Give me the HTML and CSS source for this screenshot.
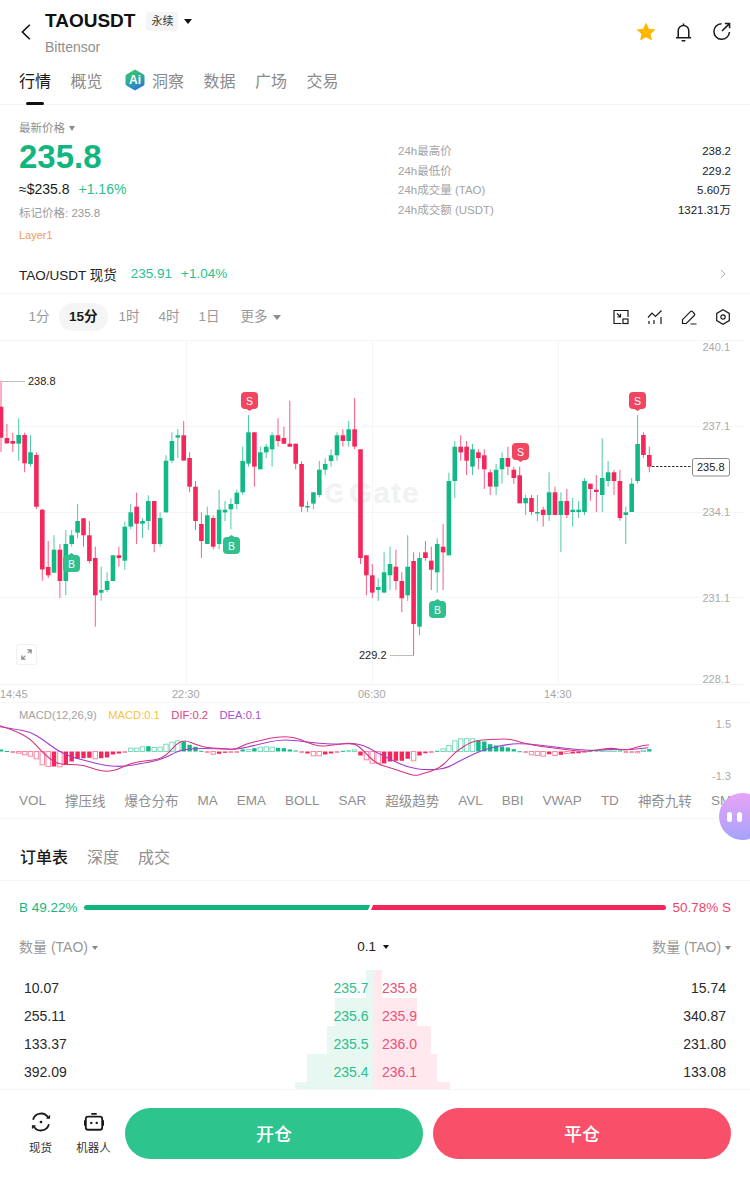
FILE: index.html
```html
<!DOCTYPE html>
<html lang="zh-CN">
<head>
    <meta charset="UTF-8">
    <meta name="viewport" content="width=device-width, initial-scale=1.0">
    <title>TAOUSDT</title>
    <link rel="stylesheet" href="styles.css">
</head>
<body>

<div class="page">

<header class="topbar">
    <svg class="back" viewBox="0 0 10 16"><path d="M8.800 .8 1.400 8l7.400 7.200"/></svg>
    <div class="symbol">
        <div class="symbol-line">
            <span class="symbol-name">TAOUSDT</span>
            <span class="perp">永续</span>
            <span class="caret caret-dark"></span>
        </div>
        <div class="symbol-sub">Bittensor</div>
    </div>
    <div class="top-icons">
        <svg class="star" viewBox="0 0 20 20"><path d="M10 .6l2.900 6.100 6.600.8-4.900 4.500 1.300 6.600L10 15.300l-5.900 3.300 1.300-6.600L.5 7.500l6.600-.8z"/></svg>
        <svg class="icon-line bell" viewBox="0 0 18 20"><path d="M3.400 16V8.600a5.600 5.600 0 0 1 11.200 0V16M1 16h16M7 19.200h4M9 1v2"/></svg>
        <svg class="icon-line share" viewBox="0 0 20 20"><path d="M18.400 10.500a8.200 8.200 0 1 1-8.400-8.700M10.500 9.500 18.400 1.700M13.500 1.500h5v5"/></svg>
    </div>
</header>

<nav class="tabs">
    <span class="tab active">行情</span>
    <span class="tab">概览</span>
    <span class="tab tab-ai">
        <svg class="ai-icon" viewBox="0 0 20 22">
            <defs>
                <linearGradient id="aiGrad" x1=".3" y1="0" x2=".7" y2="1">
                    <stop offset="0" stop-color="#3ac665"/>
                    <stop offset=".55" stop-color="#2aa6a8"/>
                    <stop offset="1" stop-color="#2a6fe0"/>
                </linearGradient>
            </defs>
            <path fill="url(#aiGrad)" d="M10 .5l8.300 4.800q1.200.7 1.200 2v7.400q0 1.300-1.200 2L10 21.500l-8.300-4.800Q.5 16 .5 14.700V7.300q0-1.300 1.200-2z"/>
            <text class="ai-text" x="10" y="15">Ai</text>
        </svg>
        洞察
    </span>
    <span class="tab">数据</span>
    <span class="tab">广场</span>
    <span class="tab">交易</span>
</nav>

<section class="summary">
    <div class="price-col">
        <div class="price-label">最新价格 <span class="caret caret-gray"></span></div>
        <div class="price">235.8</div>
        <div class="price-sub"><span>≈$235.8</span><span class="up">+1.16%</span></div>
        <div class="mark">标记价格: 235.8</div>
        <div class="sector">Layer1</div>
    </div>
    <div class="stats">
        <div class="stat"><span>24h最高价</span><b>238.2</b></div>
        <div class="stat"><span>24h最低价</span><b>229.2</b></div>
        <div class="stat"><span>24h成交量 (TAO)</span><b>5.60万</b></div>
        <div class="stat"><span>24h成交额 (USDT)</span><b>1321.31万</b></div>
    </div>
</section>

<div class="spot">
    <span class="spot-name">TAO/USDT 现货</span>
    <span class="spot-price">235.91</span>
    <span class="spot-price">+1.04%</span>
    <svg class="spot-arrow" viewBox="0 0 6 10"><path d="M1 1l4 4-4 4"/></svg>
</div>

<div class="periods">
    <span class="period">1分</span>
    <span class="period current">15分</span>
    <span class="period">1时</span>
    <span class="period">4时</span>
    <span class="period">1日</span>
    <span class="period more">更多 <span class="caret caret-more"></span></span>
    <div class="tools">
        <svg class="icon-line tool" viewBox="0 0 16 16"><path d="M8.500 14.500H1v-13h14v6.500M4 4.500 7.500 8M7.500 4.800V8H4.300"/><rect x="10" y="10" width="5" height="4.500"/></svg>
        <svg class="icon-line tool" viewBox="0 0 16 16"><path d="M1 8.500 5 4l3.500 3.500L14.500 1.500M2 12v3M7 11v4M14 8v7"/></svg>
        <svg class="icon-line tool" viewBox="0 0 16 16"><path d="M1.500 14.500v-3.800l8-8q1-1 2 0l1.800 1.800q1 1 0 2l-8 8zM9.500 15H15.500"/></svg>
        <svg class="icon-line tool" viewBox="0 0 16 16"><path d="M8 .8l6.300 3.600v7.200L8 15.200l-6.300-3.600V4.400z"/><circle cx="8" cy="8" r="2.200"/></svg>
    </div>
</div>

<div class="chart">
    <svg id="candles" class="chart-svg" width="750" height="363" viewBox="0 0 750 363">
        <g class="grid">
            <path d="M0 .5H745M0 86.500H745M0 172.500H745M0 257.500H745M0 344.500H745M186.500 0V344M372.500 0V344M558.500 0V344"/>
        </g>
        <g class="watermark">
            <path d="M341 147.500A8 8 0 1 0 342 157.500M335 153h7"/>
            <text x="349" y="163">Gate</text>
        </g>
        <g class="y-axis">
            <text x="730" y="11">240.1</text>
            <text x="730" y="90">237.1</text>
            <text x="730" y="176">234.1</text>
            <text x="730" y="262">231.1</text>
            <text x="730" y="343">228.1</text>
        </g>
        <g class="x-axis">
            <text x="0" y="358">14:45</text>
            <text x="172" y="358">22:30</text>
            <text x="358" y="358">06:30</text>
            <text x="544" y="358">14:30</text>
        </g>
        <path class="leader" d="M2 41.500H25M390 315.500H414"/>
        <text class="extreme" x="28" y="45">238.8</text>
        <text class="extreme" x="359" y="319">229.2</text>
        <path class="last-line" d="M652 126.500H692"/>
        <rect class="last-box" x="692.500" y="118.500" width="37" height="17.500" rx="2"/>
        <text class="extreme" x="697" y="131">235.8</text>
    </svg>
    <div class="expand">
        <svg class="expand-icon" viewBox="0 0 12 12"><path d="M7 1h4v4M11 1 7.500 4.500M5 11H1V7M1 11l3.500-3.500"/></svg>
    </div>
</div>

<div class="macd">
    <div class="macd-legend">
        <span>MACD(12,26,9)</span>
        <span class="c-macd">MACD:0.1</span>
        <span class="c-dif">DIF:0.2</span>
        <span class="c-dea">DEA:0.1</span>
    </div>
    <svg id="macd" width="750" height="82" viewBox="0 0 750 82">
        <text class="macd-axis" x="731" y="25">1.5</text>
        <text class="macd-axis" x="731" y="77">-1.3</text>
    </svg>
</div>

<div class="indicators">
    <span>VOL</span><span>撑压线</span><span>爆仓分布</span><span>MA</span><span>EMA</span><span>BOLL</span><span>SAR</span><span>超级趋势</span><span>AVL</span><span>BBI</span><span>VWAP</span><span>TD</span><span>神奇九转</span><span>SMC</span>
</div>

<div class="float-bot"><i></i><i></i></div>

<div class="book-tabs">
    <span class="book-tab active">订单表</span>
    <span class="book-tab">深度</span>
    <span class="book-tab">成交</span>
</div>

<div class="ratio">
    <span class="up">B 49.22%</span>
    <div class="ratio-bar">
        <div class="ratio-buy"></div>
        <div class="ratio-sell"></div>
    </div>
    <span class="down">50.78% S</span>
</div>

<div class="book-head">
    <span class="head-cell">数量 (TAO) <span class="caret caret-small"></span></span>
    <span class="head-mid">0.1 <span class="caret caret-dark caret-small"></span></span>
    <span class="head-cell">数量 (TAO) <span class="caret caret-small"></span></span>
</div>

<div class="book">
    <div class="row">
        <div class="side bid"><i class="bar" style="width:7px"></i><span class="qty">10.07</span><span class="px">235.7</span></div>
        <div class="side ask"><i class="bar" style="width:9px"></i><span class="px">235.8</span><span class="qty">15.74</span></div>
    </div>
    <div class="row">
        <div class="side bid"><i class="bar" style="width:38px"></i><span class="qty">255.11</span><span class="px">235.6</span></div>
        <div class="side ask"><i class="bar" style="width:44px"></i><span class="px">235.9</span><span class="qty">340.87</span></div>
    </div>
    <div class="row">
        <div class="side bid"><i class="bar" style="width:46px"></i><span class="qty">133.37</span><span class="px">235.5</span></div>
        <div class="side ask"><i class="bar" style="width:58px"></i><span class="px">236.0</span><span class="qty">231.80</span></div>
    </div>
    <div class="row">
        <div class="side bid"><i class="bar" style="width:66px"></i><span class="qty">392.09</span><span class="px">235.4</span></div>
        <div class="side ask"><i class="bar" style="width:64px"></i><span class="px">236.1</span><span class="qty">133.08</span></div>
    </div>
    <div class="row">
        <div class="side bid"><i class="bar" style="width:78px"></i></div>
        <div class="side ask"><i class="bar" style="width:77px"></i></div>
    </div>
</div>

<footer class="bottom">
    <div class="shortcut">
        <svg class="icon-line short-icon" viewBox="0 0 22 22">
            <path d="M2.300 8.500A9 9 0 0 1 19 6.500M19.700 13.500A9 9 0 0 1 3 15.500"/>
            <path class="solid" d="M16.500 7.500h4.500V3zM5.500 14.500H1V19z"/>
            <circle class="solid" cx="11" cy="11" r="1.500"/>
        </svg>
        <span>现货</span>
    </div>
    <div class="shortcut">
        <svg class="icon-line short-icon" viewBox="0 0 22 22">
            <rect x="2" y="5" width="18" height="14.500" rx="2.500"/>
            <path d="M8 2h6M.8 9v6M21.200 9v6"/>
            <circle class="solid" cx="8" cy="12" r="1.300"/>
            <circle class="solid" cx="14" cy="12" r="1.300"/>
        </svg>
        <span>机器人</span>
    </div>
    <button class="trade open">开仓</button>
    <button class="trade close">平仓</button>
</footer>

</div>

<script src="chart.js"></script>
</body>
</html>
```
FILE: styles.css
```css
* {
    box-sizing: border-box;
}
html, body {
    margin: 0;
    padding: 0;
    background: #fff;
}
body {
    font-family: "Liberation Sans", "Noto Sans CJK SC", sans-serif;
    color: #1a1a1a;
}
.page {
    position: relative;
    width: 750px;
    height: 1178px;
    overflow: hidden;
}
.up {
    color: #17b582;
}
.down {
    color: #ee4468;
}
.caret {
    display: inline-block;
    width: 0;
    height: 0;
    border-left: 4px solid transparent;
    border-right: 4px solid transparent;
    border-top: 5px solid #888;
    vertical-align: middle;
}
.caret-dark {
    border-top-color: #111;
}
.caret-gray {
    border-left-width: 3.5px;
    border-right-width: 3.5px;
    border-top-color: #8c8c8c;
    margin-left: 1px;
}
.caret-more {
    margin-left: 2px;
    border-top-color: #8c8c8c;
}
.caret-small {
    border-left-width: 3px;
    border-right-width: 3px;
    border-top-width: 4px;
}
.icon-line {
    fill: none;
    stroke: #1a1a1a;
    stroke-width: 1.6;
}
.icon-line .solid {
    fill: #1a1a1a;
    stroke: none;
}

/* top bar */
.topbar {
    display: flex;
    height: 62px;
    padding: 9px 19px 0 21px;
}
.back {
    width: 10px;
    height: 16px;
    margin-top: 15px;
    fill: none;
    stroke: #111;
    stroke-width: 1.6;
}
.symbol {
    margin-left: 14px;
}
.symbol-line {
    display: flex;
    align-items: center;
    height: 24px;
}
.symbol-name {
    font-size: 19px;
    font-weight: 700;
    color: #111;
}
.perp {
    margin: 0 6px 0 11px;
    padding: 0 5px;
    height: 19px;
    line-height: 19px;
    background: #f5f5f5;
    border-radius: 3px;
    font-size: 11px;
    color: #333;
}
.symbol-sub {
    margin-top: 6px;
    font-size: 14px;
    line-height: 16px;
    color: #8f8f8f;
}
.top-icons {
    display: flex;
    align-items: flex-start;
    margin-left: auto;
    padding-top: 13px;
}
.star {
    width: 20px;
    height: 20px;
    fill: #ffb800;
}
.bell {
    width: 17px;
    height: 20px;
    margin-left: 19px;
}
.share {
    width: 19px;
    height: 19px;
    margin-left: 20px;
}

/* tabs */
.tabs {
    position: relative;
    display: flex;
    gap: 19.5px;
    height: 43px;
    padding: 6px 19px 0;
    border-bottom: 1px solid #f3f3f3;
}
.tab {
    position: relative;
    display: flex;
    align-items: center;
    height: 24px;
    font-size: 16px;
    color: #8a8a8a;
}
.tab.active {
    color: #1a1a1a;
}
.tab.active::after {
    content: "";
    position: absolute;
    left: 7px;
    top: 34px;
    width: 18px;
    height: 3px;
    border-radius: 2px;
    background: #111;
}
.tab-ai {
    margin-left: 3px;
}
.ai-icon {
    width: 20px;
    height: 22px;
    margin-right: 7px;
}
.ai-text {
    font-size: 12px;
    font-weight: 700;
    fill: #fff;
    text-anchor: middle;
}

/* price block */
.summary {
    display: flex;
    height: 146px;
    padding: 15px 19px 0;
}
.price-col {
    width: 379px;
}
.price-label {
    font-size: 11.5px;
    line-height: 16px;
    color: #8f8f8f;
}
.price {
    margin-top: 1px;
    font-size: 33px;
    line-height: 40px;
    font-weight: 700;
    color: #11b67f;
}
.price-sub {
    display: flex;
    gap: 9px;
    margin-top: 2px;
    font-size: 14px;
    line-height: 20px;
}
.price-sub .up {
    color: #2abf8e;
}
.mark {
    margin-top: 6px;
    font-size: 11.5px;
    line-height: 16px;
    color: #9a9a9a;
}
.sector {
    margin-top: 6px;
    font-size: 11px;
    line-height: 16px;
    color: #f59a52;
}
.stats {
    flex: 1;
    padding-top: 22px;
}
.stat {
    display: flex;
    justify-content: space-between;
    height: 19.6px;
    font-size: 11.5px;
    line-height: 19.6px;
    color: #a3a3a3;
}
.stat b {
    font-weight: 400;
    color: #1a1a1a;
}

/* spot row */
.spot {
    display: flex;
    align-items: center;
    gap: 14px;
    height: 43px;
    padding: 3px 24px 0 19px;
    border-bottom: 1px solid #f5f5f5;
    font-size: 13.5px;
}
.spot-name {
    color: #222;
}
.spot-price {
    color: #2abf8e;
    margin-right: -5px;
}
.spot-arrow {
    width: 6px;
    height: 10px;
    margin-left: auto;
    fill: none;
    stroke: #aaa;
    stroke-width: 1;
}

/* period row */
.periods {
    display: flex;
    align-items: center;
    height: 46px;
    padding: 0 19px;
}
.period {
    height: 28px;
    padding: 0 9.5px;
    line-height: 28px;
    border-radius: 14px;
    font-size: 13.5px;
    color: #999;
}
.period.current {
    margin: 0 1px 0 -0.5px;
    padding: 0 10.5px;
    background: #f5f5f5;
    color: #1a1a1a;
    font-weight: 700;
}
.more {
    margin-left: 2px;
}
.tools {
    display: flex;
    gap: 18px;
    margin-left: auto;
}
.tool {
    width: 16px;
    height: 16px;
    stroke-width: 1.2;
}

/* kline chart */
.chart {
    position: relative;
    height: 363px;
    border-bottom: 1px solid #f5f5f5;
}
.chart-svg {
    display: block;
}
.grid path {
    fill: none;
    stroke: #f5f5f5;
    stroke-width: 1;
}
.watermark path {
    fill: none;
    stroke: #f0f2f3;
    stroke-width: 4;
}
.watermark text {
    font-size: 30px;
    font-weight: 700;
    letter-spacing: 1px;
    fill: #f0f2f3;
}
.y-axis text {
    font-size: 11px;
    fill: #aaa;
    text-anchor: end;
}
.x-axis text {
    font-size: 11px;
    fill: #a6a6a6;
}
.leader {
    fill: none;
    stroke: #bdbdbd;
    stroke-width: 1;
}
.extreme {
    font-size: 11px;
    fill: #222;
}
.last-line {
    fill: none;
    stroke: #333;
    stroke-width: 1;
    stroke-dasharray: 2.500 1.500;
}
.last-box {
    fill: #fff;
    stroke: #8a8a8a;
    stroke-width: 1;
}
.wick {
    stroke-width: 1;
}
.tag-text {
    font-size: 10.500px;
    fill: #fff;
    text-anchor: middle;
}
.expand {
    position: absolute;
    left: 16px;
    top: 304px;
    display: flex;
    align-items: center;
    justify-content: center;
    width: 21px;
    height: 21px;
    background: #fff;
    border: 1px solid #f0f0f0;
    border-radius: 3px;
}
.expand-icon {
    width: 11px;
    height: 11px;
    fill: none;
    stroke: #8a8a8a;
    stroke-width: 1.4;
}

/* macd */
.macd {
    position: relative;
    height: 81px;
}
.macd svg {
    display: block;
}
.macd-legend {
    position: absolute;
    left: 19px;
    top: 4px;
    display: flex;
    gap: 11.5px;
    font-size: 11.2px;
    line-height: 16px;
    color: #a3a3a3;
}
.c-macd {
    color: #f5c542;
}
.c-dif {
    color: #e0417f;
}
.c-dea {
    color: #a94fd0;
}
.macd-axis {
    font-size: 11px;
    fill: #aaa;
    text-anchor: end;
}

/* indicator strip */
.indicators {
    display: flex;
    align-items: center;
    gap: 19px;
    height: 35px;
    padding: 0 0 2px 19px;
    border-bottom: 1px solid #f5f5f5;
    white-space: nowrap;
    font-size: 13.5px;
    color: #8f8f8f;
}
.float-bot {
    position: absolute;
    left: 719px;
    top: 793px;
    display: flex;
    align-items: center;
    gap: 5px;
    width: 47px;
    height: 47px;
    padding-left: 8px;
    border-radius: 50%;
    background: linear-gradient(180deg, #e8a3f5, #a6a3fb);
}
.float-bot i {
    width: 5px;
    height: 10px;
    border-radius: 3px;
    background: #fff;
}

/* order book */
.book-tabs {
    display: flex;
    align-items: center;
    gap: 19px;
    height: 62px;
    padding: 12px 20px 0;
    border-bottom: 1px solid #f5f5f5;
    font-size: 16px;
    color: #8f8f8f;
}
.book-tab.active {
    color: #1a1a1a;
    font-weight: 500;
}
.ratio {
    display: flex;
    align-items: center;
    justify-content: space-between;
    height: 53px;
    padding: 0 19px;
    font-size: 13.5px;
}
.ratio-bar {
    display: flex;
    gap: 1px;
    width: 582px;
    height: 5px;
}
.ratio-buy {
    flex: 286;
    background: #11b67f;
    border-radius: 3px 0 0 3px;
    clip-path: polygon(0 0, 100% 0, calc(100% - 2px) 100%, 0 100%);
}
.ratio-sell {
    flex: 295;
    background: #f5265b;
    border-radius: 0 3px 3px 0;
    clip-path: polygon(2px 0, 100% 0, 100% 100%, 0 100%);
}
.book-head {
    display: flex;
    align-items: center;
    justify-content: space-between;
    height: 24px;
    padding: 0 19px;
    font-size: 14px;
    color: #999;
}
.head-mid {
    margin-right: 4px;
    font-size: 13.5px;
    color: #222;
}
.head-mid .caret {
    margin-left: 3px;
}
.book {
    height: 119px;
    margin-top: 12px;
    overflow: hidden;
}
.row {
    display: flex;
    height: 28px;
    font-size: 14px;
    line-height: 36px;
}
.side {
    position: relative;
    display: flex;
    justify-content: space-between;
}
.bid {
    width: 372.500px;
    padding: 0 4px 0 24px;
}
.ask {
    width: 377.500px;
    padding: 0 24px 0 9.500px;
}
.bar {
    position: absolute;
    top: 0;
    bottom: 0;
}
.bid .bar {
    right: 0;
    background: #e6f8f1;
}
.ask .bar {
    left: 0;
    background: #ffe9ee;
}
.px, .qty {
    position: relative;
}
.qty {
    color: #2a2a2a;
}
.bid .px {
    color: #2abf8e;
}
.ask .px {
    color: #ee4f76;
}

/* bottom bar */
.bottom {
    display: flex;
    align-items: flex-start;
    height: 89px;
    padding: 18px 19px 0 0;
    border-top: 1px solid #f5f5f5;
}
.shortcut {
    display: flex;
    flex-direction: column;
    align-items: center;
    width: 53px;
    font-size: 11.5px;
    color: #333;
}
.shortcut:first-child {
    margin-left: 14px;
}
.short-icon {
    width: 20px;
    height: 20px;
    margin: 4px 0 7px;
    stroke-width: 2;
}
.trade {
    width: 298px;
    height: 51px;
    padding: 0 0 2px;
    border: none;
    border-radius: 26px;
    color: #fff;
    font-family: inherit;
    font-size: 18px;
    font-weight: 500;
}
.open {
    margin-left: 5px;
    background: #2dc48d;
}
.close {
    margin-left: 10px;
    background: #f9506a;
}
```
FILE: chart.js
```js
// readings are in 3x zoom units, so divide by 3 when drawing
const GREEN = '#12b886';
const RED = '#f5265b';

// color, high, low, body top, body bottom
const candles = [
    'R122,336,200,293','R252,312,294,310','R278,336,303,311','G235,362,285,311','R278,397,285,370',
    'G286,380,337,372','R337,507,345,500','R507,722,509,688','R603,714,681,706','G586,698,629,698',
    'R612,774,629,723','G570,766,612,723','G570,620,586,612','G492,594,543,578','R535,620,535,586',
    'R543,670,586,663','R620,860,654,766','G680,782,750,758','G697,757,723,750','G646,723,646,723',
    'R620,680,646,654','G545,689,560,662','G492,568,517,560','R458,612,500,551','G535,594,543,551',
    'G466,570,483,543','R483,637,483,612','G517,620,534,612','G346,517,362,517','G277,370,303,362',
    'G268,354,286,293','R243,362,286,362','R337,457,354,440','R423,570,440,543','R517,654,552,603',
    'G500,612,526,612','R526,628,534,620','G449,628,509,612','G483,543,509,517','G475,568,492,508',
    'G449,508,458,492','G320,465,363,457','G225,380,277,371','R277,440,277,380','G320,388,337,388',
    'G312,354,320,337','G277,380,286,328','R235,320,286,303','R260,312,294,311','R182,320,311,320',
    'R311,388,311,371','R364,516,372,500','G484,516,498,500','G457,508,457,491','G363,472,389,465',
    'G355,405,372,389','G328,380,346,363','G277,362,286,346','R268,320,286,303','G243,320,268,303',
    'R174,328,268,320','R328,672,328,654','R646,766,646,706','R672,775,706,758','G715,783,741,750',
    'G637,758,697,758','G620,750,672,706','R629,750,680,723','R697,817,723,775','G586,783,680,766',
    'R637,945,663,852','G637,886,654,860','R603,662,637,654','R620,750,662,689','G595,758,612,697',
    'R552,750,620,637','G398,646,423,646','G303,474,320,423','R286,362,320,337','R303,405,320,362',
    'G312,405,328,380','R328,388,337,354','R328,447,346,388','R388,465,397,440','G372,465,389,440',
    'G337,431,354,388','R320,405,354,380','R380,431,389,414','R380,490,406,490','G465,525,474,490',
    'R465,525,474,516','G465,543,516,518','R500,560,509,525','G397,543,457,525','R440,525,457,525',
    'G457,636,483,525','R447,534,483,525','G474,560,509,516','G483,534,509,516','G414,525,423,516',
    'R431,482,431,447','R405,516,449,456','G295,516,414,465','G363,440,397,423','R390,465,397,423',
    'R390,542,423,534','G500,612,517,525','G414,516,431,516','G225,431,312,423','R277,354,285,345',
    'R320,397,345,380'
];

// signed bar height, up is green and down is red
const hist = [
    6,1.5,-2,-5,-10,-14,-22,-40,-45,-45,-46,-40,-30,-22,-20,-19,-22,-20,-18,-9,-6,-2,
    10,10,14,16,12,13,22,28,32,30,20,14,2,-3,-8,-7,-4,-3,-1,6,6,10,13,14,13,11,10,6,3,
    -3,-6,-13,-13,-9,-6,-3,2,3,5,-12,-25,-35,-35,-36,-30,-28,-28,-22,-28,-12,-5,-2,2,
    8,18,32,38,38,38,32,30,22,18,15,12,7,1,-2,-10,-12,-14,-8,-12,-10,-6,-6,-5,-2,2,3,4,
    5,5,3,-3,-3,-4,4,7
];
const filled = [0,9,11,12,13,14,15,17,18,19,20,25,31,32,33,37,38,39,41,43,47,48,49,52,55,56,57,
    61,65,66,67,68,69,71,72,81,82,83,84,85,86,87,93,95,97,98,106,110];

const difLine = [[0,122],[40,135],[90,160],[130,205],[170,238],[210,238],[250,240],[290,255],[320,260],
    [350,255],[390,235],[430,228],[490,222],[530,175],[555,165],[590,180],[620,188],[680,192],[710,193],
    [740,175],[790,165],[830,155],[880,155],[920,172],[960,185],[1000,180],[1060,172],[1090,195],[1125,235],
    [1175,250],[1215,263],[1243,273],[1275,265],[1325,247],[1365,200],[1415,170],[1445,165],[1495,162],
    [1530,162],[1565,173],[1625,185],[1685,192],[1745,200],[1785,196],[1835,188],[1875,197],[1925,182],[1947,180]];
const deaLine = [[0,125],[40,132],[90,140],[130,165],[170,195],[210,215],[260,228],[320,243],[370,245],
    [430,235],[490,222],[530,200],[555,193],[610,190],[680,192],[710,193],[770,180],[830,165],[880,165],
    [950,175],[1010,178],[1060,175],[1090,180],[1125,200],[1175,225],[1225,248],[1275,255],[1335,252],
    [1375,230],[1425,205],[1465,190],[1525,178],[1575,175],[1655,185],[1725,193],[1785,197],[1845,192],
    [1885,195],[1945,188]];

// marker x, y, letter (tip points at the candle)
const tags = [
    [63,215,'B'],[223,197,'B'],[429,261,'B'],
    [241,52,'S'],[512,103,'S'],[629,52,'S']
];

function candleX(i) {
    return 1 + 5.894 * i;
}

function drawCandles() {
    let out = '';
    candles.forEach(function(c, i) {
        const color = c[0] === 'G' ? GREEN : RED;
        const v = c.slice(1).split(',').map(n => n / 3);
        const x = candleX(i);
        out += `<path class="wick" stroke="${color}" stroke-opacity=".75" d="M${x.toFixed(1)} ${v[0].toFixed(1)}V${v[1].toFixed(1)}"/>`;
        out += `<rect fill="${color}" x="${(x - 2.3).toFixed(1)}" y="${v[2].toFixed(1)}" width="4.6" height="${Math.max(v[3] - v[2], 1.5).toFixed(1)}"/>`;
    });
    tags.forEach(function(t) {
        const isBuy = t[2] === 'B';
        const color = isBuy ? '#2fc08e' : '#f0465f';
        const tipY = isBuy ? t[1] - 2 : t[1] + 19;
        const mid = t[0] + 8.5;
        out += `<rect fill="${color}" x="${t[0]}" y="${t[1]}" width="17" height="17" rx="4"/>`;
        out += `<path fill="${color}" d="M${mid - 3} ${isBuy ? t[1] : t[1] + 17}L${mid} ${tipY}L${mid + 3} ${isBuy ? t[1] : t[1] + 17}Z"/>`;
        out += `<text class="tag-text" x="${mid}" y="${t[1] + 12.5}">${t[2]}</text>`;
    });
    document.getElementById('candles').insertAdjacentHTML('beforeend', out);
}

function smoothPath(points) {
    const p = points.map(a => [a[0] / 3, a[1] / 3 - 18]);
    let d = `M${p[0][0]} ${p[0][1].toFixed(1)}`;
    for (let i = 1; i < p.length - 1; i++) {
        const mx = (p[i][0] + p[i + 1][0]) / 2;
        const my = (p[i][1] + p[i + 1][1]) / 2;
        d += `Q${p[i][0].toFixed(1)} ${p[i][1].toFixed(1)} ${mx.toFixed(1)} ${my.toFixed(1)}`;
    }
    const last = p[p.length - 1];
    return d + `L${last[0].toFixed(1)} ${last[1].toFixed(1)}`;
}

function drawMacd() {
    const base = 48.5;
    let out = '';
    hist.forEach(function(v, i) {
        const color = v > 0 ? GREEN : RED;
        const h = Math.abs(v) / 3;
        const x = (candleX(i) - 2.2).toFixed(1);
        const y = (v > 0 ? base - h : base).toFixed(1);
        if (filled.includes(i) || Math.abs(v) <= 3) {
            out += `<rect fill="${color}" x="${x}" y="${y}" width="4.4" height="${Math.max(h, 1).toFixed(1)}"/>`;
        } else {
            out += `<rect fill="#fff" stroke="${color}" stroke-opacity=".55" x="${x}" y="${y}" width="4.4" height="${h.toFixed(1)}"/>`;
        }
    });
    out += `<path fill="none" stroke="#a23ccd" stroke-width="1.1" d="${smoothPath(deaLine)}"/>`;
    out += `<path fill="none" stroke="#d6337f" stroke-width="1.1" d="${smoothPath(difLine)}"/>`;
    document.getElementById('macd').insertAdjacentHTML('beforeend', out);
}

drawCandles();
drawMacd();
```
